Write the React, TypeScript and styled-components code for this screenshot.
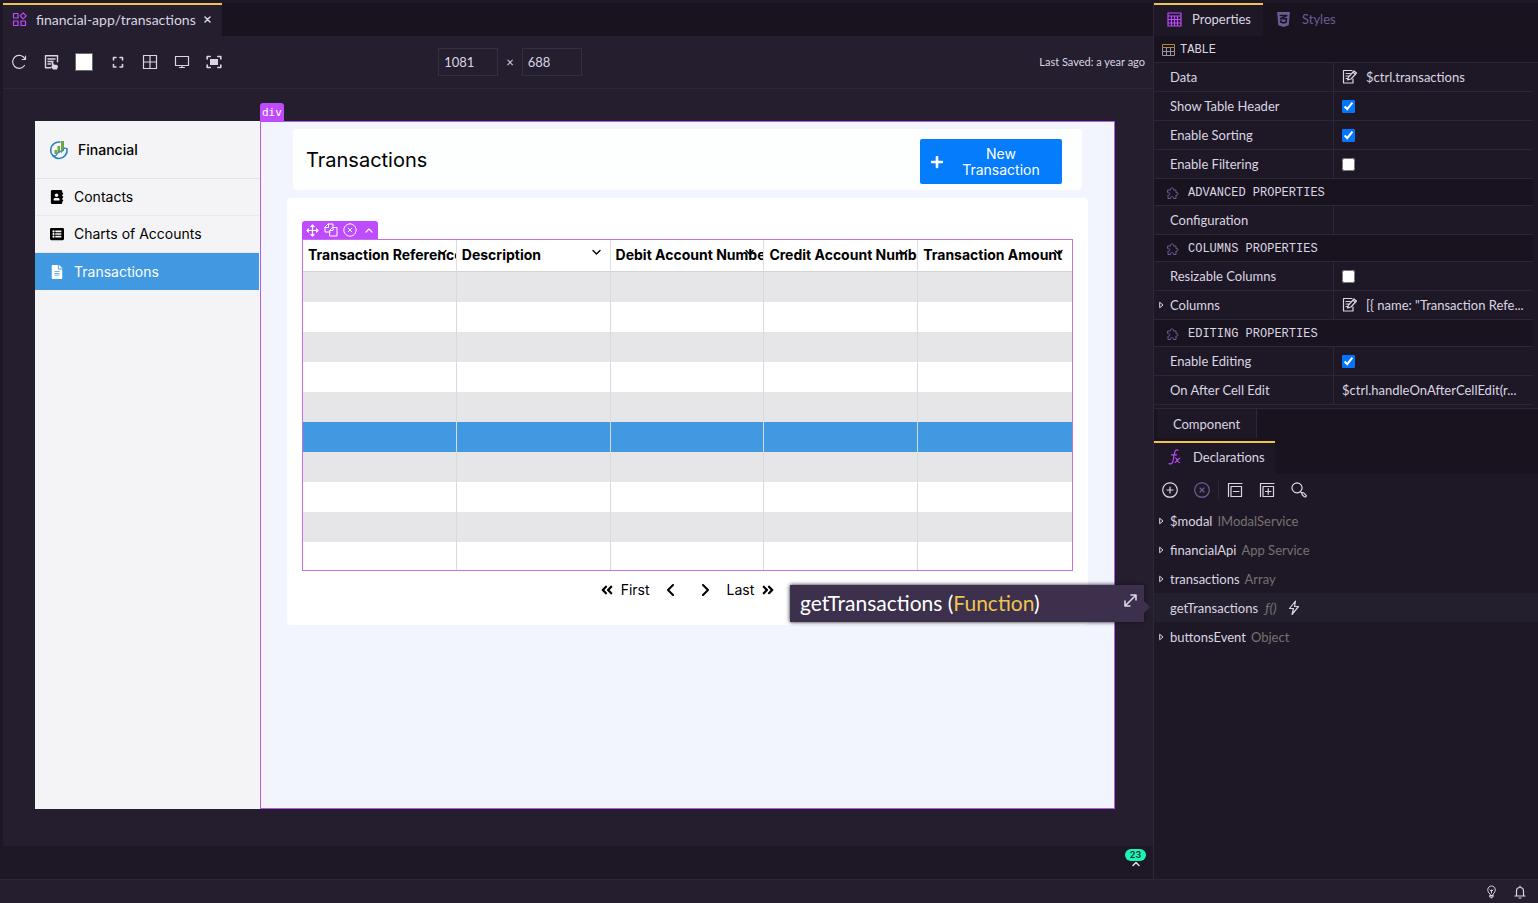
import React from 'react';
import styled, { createGlobalStyle } from 'styled-components';
import { FaAddressBook, FaListAlt, FaFileAlt, FaPlus, FaAngleDoubleLeft, FaAngleDoubleRight, FaCss3Alt } from 'react-icons/fa';

const ui = 'Lato, "Open Sans", sans-serif';
const app = 'Inter, "Liberation Sans", sans-serif';
const mono = '"Liberation Mono", "DejaVu Sans Mono", monospace';

const c = {
  base: '#1e1826',
  dark: '#191320',
  canvas: '#241e2f',
  line: '#2c2637',
  text: '#dad5e2',
  muted: '#77726f',
  violet: '#6a5d93',
  purple: '#be4bfd',
  yellow: '#eec44e',
};

const GlobalStyle = createGlobalStyle`
  * { box-sizing: border-box; }
  body { margin: 0; background: ${c.base}; color: ${c.text}; font: 13px/16px ${ui}; }
  button { font: inherit; color: inherit; background: none; border: 0; padding: 0; margin: 0; }
  svg { display: block; flex: none; }
`;

const Shell = styled.div`
  min-height: 100vh;
  display: flex;
  flex-direction: column;
  padding-top: 3px;
`;
const Workspace = styled.div`
  flex: 1;
  display: grid;
  grid-template-columns: minmax(0, 1fr) 385px;
`;
const Editor = styled.main`
  display: flex;
  flex-direction: column;
  min-width: 0;
  padding-left: 3px;
  background: ${c.base};
`;
const TabBar = styled.div`
  display: flex;
  height: 33px;
  flex: none;
  background: ${c.dark};
`;
const FileTab = styled.div`
  display: flex;
  align-items: center;
  width: 219px;
  padding: 0 9px 2px;
  background: ${c.canvas};
  border-top: 2px solid ${c.yellow};
  font-size: 14px;
  & > span { margin: 0 8px 0 9px; }
`;
const Toolbar = styled.div`
  display: grid;
  grid-template-columns: 1fr auto 1fr;
  align-items: center;
  height: 53px;
  flex: none;
  padding: 0 8px;
  background: ${c.canvas};
  border-bottom: 1px solid ${c.line};
`;
const ToolGroup = styled.div`
  display: flex;
  align-items: center;
  gap: 16px;
`;
const ToolButton = styled.button`
  display: grid;
  place-items: center;
  width: 16px;
  height: 16px;
`;
const Swatch = styled.button`
  width: 18px;
  height: 18px;
  && { margin-right: 1px; }
  background: #fff;
  border: 1px solid #6b6676;
`;
const SizeFields = styled.div`
  display: flex;
  align-items: center;
  gap: 8px;
  margin-right: 136px;
`;
const SizeInput = styled.input`
  width: 60px;
  height: 28px;
  padding: 0 5px;
  font: 13px ${ui};
  color: ${c.text};
  background: ${c.canvas};
  border: 1px solid #352f40;
`;
const Saved = styled.div`
  text-align: right;
  font-size: 11px;
`;
const Canvas = styled.div`
  flex: 1;
  display: flex;
  padding: 32px 38px 37px 32px;
  background: ${c.canvas};
`;
const Frame = styled.div`
  flex: 1;
  min-width: 0;
  display: grid;
  grid-template-columns: 225px minmax(0, 1fr);
  color: #000;
  font-family: ${app};
  font-size: 14px;
`;
const Side = styled.nav`
  background: #f4f4f6;
`;
const Brand = styled.div`
  display: flex;
  align-items: center;
  gap: 9px;
  height: 58px;
  padding-left: 14px;
  font-weight: 500;
  border-bottom: 1px solid #e4e4e8;
`;
const SideLink = styled.a<{ $active?: boolean }>`
  display: flex;
  align-items: center;
  gap: 10px;
  height: 37px;
  margin-right: 1px;
  padding-left: 15px;
  text-decoration: none;
  color: ${p => (p.$active ? '#fff' : '#000')};
  background: ${p => (p.$active ? '#4199e2' : 'none')};
  border-bottom: ${p => (p.$active ? 0 : 1)}px solid #e9e9ec;
`;
const IconSlot = styled.span`
  display: grid;
  place-items: center;
  width: 14px;
`;
const Page = styled.div`
  position: relative;
  padding: 7px 26px 0;
  background: #f2f4fe;
  border: 1px solid #b45be2;
`;
const DivTag = styled.div`
  position: absolute;
  left: -1px;
  top: -19px;
  height: 19px;
  padding: 0 2px;
  border-radius: 3px 3px 0 0;
  background: ${c.purple};
  color: #fff;
  font: 11px/19px "DejaVu Sans Mono", monospace;
`;
const TitleCard = styled.div`
  display: flex;
  align-items: center;
  justify-content: space-between;
  height: 61px;
  margin: 0 6px 8px;
  padding: 0 20px 0 13px;
  background: #fdfefe;
  border-radius: 4px;
`;
const Title = styled.h1`
  margin: 0;
  font-size: 20px;
  font-weight: 400;
`;
const NewButton = styled.button`
  display: flex;
  align-items: center;
  width: 142px;
  height: 45px;
  padding: 0 10px;
  && { margin-top: 4px; }
  border-radius: 2px;
  background: #047cfb;
  color: #fff;
  & > span { flex: 1; padding-left: 6px; line-height: 16px; text-align: center; }
`;
const TableCard = styled.section`
  height: 427px;
  padding: 41px 15px 0;
  background: #fff;
  border-radius: 4px;
`;
const Selection = styled.div`
  position: relative;
  height: 332px;
  border: 1px solid #c56fe6;
`;
const SelectionTag = styled.div`
  position: absolute;
  left: -1px;
  top: -19px;
  display: flex;
  align-items: center;
  gap: 5px;
  width: 76px;
  height: 18px;
  padding: 0 4px;
  color: #fff;
  background: ${c.purple};
  border-radius: 3px 3px 0 0;
`;
const Clip = styled.div`
  height: 330px;
  overflow: hidden;
`;
const Grid = styled.table`
  width: 100%;
  table-layout: fixed;
  border-collapse: separate;
  border-spacing: 0;
`;
const Th = styled.th`
  position: relative;
  height: 32px;
  padding: 0 0 2px 5px;
  overflow: hidden;
  white-space: nowrap;
  text-align: left;
  font-weight: 700;
  border-bottom: 1px solid #d3d3d6;
  border-right: 1px solid #dedee2;
  &:last-child { border-right: 0; }
  & > button { position: absolute; right: 9px; top: 8px; }
`;
const Row = styled.tr<{ $tone: string }>`
  background: ${p => p.$tone};
`;
const Td = styled.td`
  height: 30px;
  padding: 0;
  border-right: 1px solid #d9dade;
  &:last-child { border-right: 0; }
`;
const Pager = styled.div`
  display: flex;
  justify-content: center;
  align-items: center;
  height: 38px;
  gap: 9px;
`;
const PageButton = styled.button`
  display: flex;
  align-items: center;
  justify-content: center;
  gap: 7px;
  min-width: 25px;
  height: 20px;
`;
const Drawer = styled.div`
  display: flex;
  justify-content: flex-end;
  align-items: flex-start;
  height: 33px;
  padding: 3px 7px 0 0;
`;
const Count = styled.button`
  display: flex;
  flex-direction: column;
  align-items: center;
  & > span {
    width: 21px;
    height: 12px;
    border-radius: 6px;
    background: #1cf3b5;
    color: #16352f;
    font: 600 9px/12px ${app};
  }
`;
const Panel = styled.aside`
  min-width: 0;
  border-left: 1px solid ${c.line};
  background: ${c.base};
`;
const PanelTab = styled.button<{ $active?: boolean; $width: number }>`
  display: flex;
  align-items: center;
  gap: 10px;
  width: ${p => p.$width}px;
  && { padding: 0 0 3px ${p => (p.$active ? 13 : 12)}px; }
  border-top: 2px solid ${p => (p.$active ? c.yellow : 'transparent')};
  background: ${p => (p.$active ? c.base : 'none')};
  color: ${p => (p.$active ? c.text : c.violet)};
`;
const Section = styled.h2<{ $main?: boolean }>`
  display: flex;
  align-items: center;
  gap: ${p => (p.$main ? 5 : 9)}px;
  height: 27px;
  margin: 0 ${p => (p.$main ? 0 : 5)}px 0 0;
  padding: 2px 0 0 ${p => (p.$main ? 8 : 12)}px;
  font: 400 12px/16px ${mono};
  background: ${c.dark};
  border-bottom: 1px solid ${c.line};
`;
const Property = styled.div`
  display: grid;
  grid-template-columns: 180px minmax(0, 1fr);
  height: 29px;
  margin-right: 5px;
  border-bottom: 1px solid ${c.line};
`;
const Name = styled.label`
  display: flex;
  align-items: center;
  padding-left: 5px;
  border-right: 1px solid ${c.line};
`;
const Arrow = styled.span`
  display: grid;
  place-items: center;
  width: 5px;
  height: 16px;
  margin-right: 6px;
`;
const Value = styled.div`
  display: flex;
  align-items: center;
  gap: 8px;
  min-width: 0;
  padding: 0 2px 0 8px;
  & > span { overflow: hidden; text-overflow: ellipsis; white-space: nowrap; }
`;
const Check = styled.input`
  width: 13px;
  height: 13px;
  margin: 0;
  accent-color: #0075ff;
`;
const ComponentBar = styled.div`
  height: 33px;
  margin-top: 3px;
  padding-left: 3px;
  background: ${c.dark};
  border-top: 1px solid ${c.line};
`;
const ComponentTab = styled.button`
  width: 100px;
  height: 29px;
  background: ${c.base};
  border-right: 1px solid ${c.line};
`;
const DeclTools = styled.div`
  display: flex;
  align-items: center;
  gap: 16px;
  height: 32px;
  padding-left: 8px;
`;
const ToolDivider = styled.span`
  width: 1px;
  height: 18px;
  margin: 0 -8px;
  background: ${c.line};
`;
const Declaration = styled.div<{ $selected?: boolean }>`
  position: relative;
  display: flex;
  align-items: center;
  height: 29px;
  padding-left: 5px;
  background: ${p => (p.$selected ? '#241f2d' : 'none')};
  & > i { margin-left: 5px; font-style: normal; color: ${c.muted}; }
  & > em { margin: 0 11px 0 7px; font-size: 14px; color: ${c.muted}; }
`;
const Tooltip = styled.div`
  position: absolute;
  right: calc(100% + 10px);
  top: -8px;
  width: 354px;
  height: 37px;
  padding: 6px 10px;
  color: #fff;
  background: #3c304d;
  box-shadow: 0 0 4px #14101c;
  font-size: 21px;
  line-height: 24px;
  & > b { font-weight: 400; color: ${c.yellow}; }
  & > button { position: absolute; right: 6px; top: 8px; color: ${c.text}; }
  &::after {
    content: '';
    position: absolute;
    left: 100%;
    top: 16px;
    border: 6px solid transparent;
    border-left-color: #3c304d;
    border-right-width: 0;
  }
`;
const Status = styled.footer`
  display: flex;
  justify-content: flex-end;
  align-items: center;
  gap: 17px;
  height: 24px;
  padding-right: 12px;
  background: ${c.canvas};
  border-top: 1px solid ${c.line};
`;

type SvgProps = { d: string; w?: number; h?: number; sw?: number; color?: string; fd?: string };
const Icon = ({ d, w = 16, h = w, sw = 1.2, color = 'currentColor', fd }: SvgProps) => (
  <svg width={w} height={h} viewBox={`0 0 ${w} ${h}`} fill="none" stroke={color} strokeWidth={sw} strokeLinecap="round" strokeLinejoin="round" aria-hidden="true">
    <path d={d} />
    {fd && <path d={fd} fill={color} stroke="none" />}
  </svg>
);

const icons = {
  blocks: 'M1.5 1.5h4.500v4.500h-4.500zM1.5 9h4.500v4.500h-4.500zM9 9h4.500v4.500H9zM11.2 .8l3 3-3 3-3-3z',
  close: 'M1 1l5 5M6 1L1 6',
  refresh: 'M14 5A6.500 6.500 0 1 0 13.500 11.500M14.500 2.200v3.300h-3.300',
  inspect: 'M7.5 13.8h-5v-12h12v6M5 5h7M5 7.500h5M5 10h2.500',
  expand: 'M3.500 6V3.500H6M10 3.500h2.500V6M12.500 10.500V13H10M6 13H3.500v-2.500',
  panes: 'M1.5 1.5h13v13h-13zM8 1.5v13M1.5 8h13',
  monitor: 'M1.5 2.5h13v9h-13zM8 11.5v2M5.5 13.5h5',
  fit: 'M1.200 5V2.5h3M11.800 2.5h3V5M14.800 11v2.5h-3M4.200 13.5h-3V11',
  table: 'M1 1h13v13H1zM1 4h13M1 7.5h13M1 11h13M4.5 4v10M7.5 4v10M10.5 4v10',
  puzzle: 'M2 3h2.500C3.500 .3 8.500 .3 7.500 3H10v2.500C12.700 4.500 12.700 9 10 8v3.500H7.500C8.500 9 3.500 9 4.500 11.500H2V8C4.500 9 4.500 4.500 2 5.500z',
  edit: 'M11 10v4H1.500V1.500H10M4 4.500h4M4 7h2.500M4 9.500h1.500M5.500 11l1-3L12 2l2.500 2L9 10zM11 3.200l2.500 2.200',
  plusCircle: 'M8 .8a7.200 7.200 0 1 0 .01 0M8 5v6M5 8h6',
  xCircle: 'M8 .8a7.200 7.200 0 1 0 .01 0M6 6l4 4M10 6l-4 4',
  collapse: 'M1.500 14.500V1.500H15M4 4.500h10.500v10H4zM6.500 9.500h5.500',
  expandAll: 'M1.500 14.500V1.500H15M4 4.500h10.500v10H4zM6.500 9.500h5.500M9.250 6.700v5.600',
  search: 'M6 .8a5 5 0 1 0 .01 0M9.500 9.800l1.700 1.500M11 11.200c1-1.200 2 0 3 1s1.800 1.700 1 2.400-1.800.2-2.700-.8-2-1.600-1.300-2.600',
  bolt: 'M7.500 1L1.500 8.500h4L4 14.500l6.500-8h-4z',
  fx: 'M11 1.200c-2-.8-2.900.4-3.300 2.300L6 12c-.4 2.300-1.900 3.300-4 2.600M4.500 5.800h5M8.500 9c1.500 0 1.800 4.500 4 4.500M13 9c-1 0-4 4.500-5 4.500',
  move: 'M6.500 1v11M1 6.500h11M5 2.500L6.500 1 8 2.500M5 10.500L6.500 12 8 10.500M2.500 5L1 6.500 2.500 8M10.500 5L12 6.500 10.500 8',
  copy: 'M6 9H1V4l3-3h5v3M1 4.500h3.500V1M6 7l2.500-2.500h4.500V13H6zM6 7.500h3V4.500',
  tagClose: 'M7 .8a6.200 6.200 0 1 0 .01 0M5.200 5.200l3.600 3.600M8.800 5.200L5.200 8.800',
  up: 'M4 8l3-3 3 3',
  down: 'M1 2.500l3.500 3.500L8 2.500',
  diag: 'M2 13L13 2M8 2h5v5M2 8v5h5',
  bulb: 'M4 9C.2 6.500 1.500 1 5.500 1S10.800 6.500 7 9v3H4zM4 10.500h3M5.500 8V5M4 5l1.500 1.500L7 5M5 12.800h1',
  bell: 'M1 11h10M2.500 11V6a3.500 3.500 0 0 1 7 0v5M6 1v1.500M5 13h2',
};

const Logo = () => (
  <svg width="20" height="20" viewBox="0 0 20 20" fill="none" aria-hidden="true">
    <path d="M11.500 2.200A8.200 8.200 0 1 0 18 9" stroke="#2880bd" strokeWidth="1.600" />
    <path d="M5.500 14v-4h2.500v4M8.500 13V6h2.500v7M12 11V1h3v10z" fill="#6fa642" />
    <path d="M3 15l3.500 1 4-5 2 1 3-4 3.500 1" stroke="#3289c5" strokeWidth="1.200" />
  </svg>
);

const Expander = () => <Icon w={5} h={8} sw={1} d="M1 1.500L4 4 1 6.500z" />;

type Prop = { name: string; checked?: boolean; value?: string; edit?: boolean; open?: boolean };
const PropertyRow = ({ name, checked, value, edit, open }: Prop) => {
  const id = name.toLowerCase().replace(/ /g, '-');
  return (
    <Property>
      <Name htmlFor={checked === undefined ? undefined : id}><Arrow>{open && <Expander />}</Arrow>{name}</Name>
      <Value>
        {edit && <Icon d={icons.edit} />}
        {checked !== undefined && <Check id={id} type="checkbox" defaultChecked={checked} />}
        {value && <span>{value}</span>}
      </Value>
    </Property>
  );
};

const SectionTitle = ({ children }: { children: React.ReactNode }) => (
  <Section><Icon w={13} sw={1} d={icons.puzzle} color={c.violet} />{children}</Section>
);

const columns = ['Transaction Reference', 'Description', 'Debit Account Number', 'Credit Account Number', 'Transaction Amount'];
const tones = ['#e6e6e8', '#fff', '#e6e6e8', '#fff', '#e6e6e8', '#4199e2', '#e6e6e8', '#fff', '#e6e6e8', '#fff'];

export default function App() {
  return (
    <Shell>
      <GlobalStyle />
      <Workspace>
        <Editor>
          <TabBar>
            <FileTab>
              <Icon w={15} d={icons.blocks} color={c.purple} />
              <span>financial-app/transactions</span>
              <button aria-label="Close tab"><Icon w={7} d={icons.close} sw={1.5} /></button>
            </FileTab>
          </TabBar>
          <Toolbar>
            <ToolGroup>
              <ToolButton aria-label="Refresh"><Icon d={icons.refresh} /></ToolButton>
              <ToolButton aria-label="Inspect"><Icon d={icons.inspect} sw={1.4} fd="M8.500 8l1.500 0 .8 2.500 3.500.5.7 1.500-1 3h-4l-2.500-3h1.500z" /></ToolButton>
              <Swatch aria-label="Background colour" />
              <ToolButton aria-label="Expand"><Icon d={icons.expand} sw={1.6} /></ToolButton>
              <ToolButton aria-label="Split"><Icon d={icons.panes} /></ToolButton>
              <ToolButton aria-label="Device"><Icon d={icons.monitor} /></ToolButton>
              <ToolButton aria-label="Fit"><Icon d={icons.fit} sw={1.6} fd="M4 5h8v6H4z" /></ToolButton>
            </ToolGroup>
            <SizeFields>
              <SizeInput aria-label="Width" defaultValue="1081" />
              <span>×</span>
              <SizeInput aria-label="Height" defaultValue="688" />
            </SizeFields>
            <Saved>Last Saved: a year ago</Saved>
          </Toolbar>
          <Canvas>
            <Frame>
              <Side>
                <Brand><Logo />Financial</Brand>
                <SideLink href="#contacts"><IconSlot><FaAddressBook size={14} /></IconSlot>Contacts</SideLink>
                <SideLink href="#accounts"><IconSlot><FaListAlt size={14} /></IconSlot>Charts of Accounts</SideLink>
                <SideLink href="#transactions" $active><IconSlot><FaFileAlt size={14} /></IconSlot>Transactions</SideLink>
              </Side>
              <Page>
                <DivTag>div</DivTag>
                <TitleCard>
                  <Title>Transactions</Title>
                  <NewButton><FaPlus size={14} /><span>New Transaction</span></NewButton>
                </TitleCard>
                <TableCard>
                  <Selection>
                    <SelectionTag>
                      <Icon w={13} d={icons.move} />
                      <Icon w={14} sw={1} d={icons.copy} />
                      <Icon w={14} sw={1} d={icons.tagClose} />
                      <Icon w={13} d={icons.up} />
                    </SelectionTag>
                    <Clip>
                      <Grid>
                        <thead>
                          <tr>
                            {columns.map(name => (
                              <Th key={name}>{name}<button aria-label={`${name} menu`}><Icon w={9} d={icons.down} sw={1.4} /></button></Th>
                            ))}
                          </tr>
                        </thead>
                        <tbody>
                          {tones.map((tone, i) => (
                            <Row key={i} $tone={tone}>{columns.map(name => <Td key={name} />)}</Row>
                          ))}
                        </tbody>
                      </Grid>
                    </Clip>
                  </Selection>
                  <Pager>
                    <PageButton><FaAngleDoubleLeft size={14} />First</PageButton>
                    <PageButton aria-label="Previous"><Icon w={12} d="M8 1L3 6l5 5" sw={2} /></PageButton>
                    <PageButton aria-label="Next"><Icon w={12} d="M4 1l5 5-5 5" sw={2} /></PageButton>
                    <PageButton>Last<FaAngleDoubleRight size={14} /></PageButton>
                  </Pager>
                </TableCard>
              </Page>
            </Frame>
          </Canvas>
          <Drawer>
            <Count aria-label="Open console"><span>23</span><Icon w={10} h={6} d="M2 4.500l3-3 3 3" sw={1.6} /></Count>
          </Drawer>
        </Editor>
        <Panel>
          <TabBar>
            <PanelTab $active $width={109}><Icon w={15} d={icons.table} color={c.purple} />Properties</PanelTab>
            <PanelTab $width={83}><FaCss3Alt size={17} />Styles</PanelTab>
          </TabBar>
          <Section $main>
            <svg width="13" height="12" viewBox="0 0 13 12" fill="none" aria-hidden="true">
              <path d="M.5 3.500v8h12v-8M.5 7.500h12M4.500 3.500v8M8.500 3.500v8" stroke="#9a949f" />
              <path d="M.5 3.500v-3h12v3z" stroke="#a78c45" />
            </svg>
            TABLE
          </Section>
          <PropertyRow name="Data" edit value="$ctrl.transactions" />
          <PropertyRow name="Show Table Header" checked />
          <PropertyRow name="Enable Sorting" checked />
          <PropertyRow name="Enable Filtering" checked={false} />
          <SectionTitle>ADVANCED PROPERTIES</SectionTitle>
          <PropertyRow name="Configuration" />
          <SectionTitle>COLUMNS PROPERTIES</SectionTitle>
          <PropertyRow name="Resizable Columns" checked={false} />
          <PropertyRow name="Columns" open edit value={'[{ name: "Transaction Refe...'} />
          <SectionTitle>EDITING PROPERTIES</SectionTitle>
          <PropertyRow name="Enable Editing" checked />
          <PropertyRow name="On After Cell Edit" value="$ctrl.handleOnAfterCellEdit(r..." />
          <ComponentBar><ComponentTab>Component</ComponentTab></ComponentBar>
          <TabBar>
            <PanelTab $active $width={121}><Icon d={icons.fx} color={c.purple} />Declarations</PanelTab>
          </TabBar>
          <DeclTools>
            <ToolButton aria-label="Add"><Icon d={icons.plusCircle} /></ToolButton>
            <ToolButton aria-label="Remove"><Icon d={icons.xCircle} color={c.violet} /></ToolButton>
            <ToolDivider />
            <ToolButton aria-label="Collapse all"><Icon d={icons.collapse} /></ToolButton>
            <ToolButton aria-label="Expand all"><Icon d={icons.expandAll} /></ToolButton>
            <ToolButton aria-label="Search"><Icon d={icons.search} /></ToolButton>
          </DeclTools>
          <Declaration><Arrow><Expander /></Arrow>$modal<i>IModalService</i></Declaration>
          <Declaration><Arrow><Expander /></Arrow>financialApi<i>App Service</i></Declaration>
          <Declaration><Arrow><Expander /></Arrow>transactions<i>Array</i></Declaration>
          <Declaration $selected>
            <Arrow />getTransactions<em>ƒ()</em><Icon w={12} h={16} d={icons.bolt} />
            <Tooltip>getTransactions (<b>Function</b>)<button aria-label="Expand details"><Icon w={15} d={icons.diag} sw={1.6} /></button></Tooltip>
          </Declaration>
          <Declaration><Arrow><Expander /></Arrow>buttonsEvent<i>Object</i></Declaration>
        </Panel>
      </Workspace>
      <Status>
        <button aria-label="Tips"><Icon w={11} h={14} sw={1} d={icons.bulb} /></button>
        <button aria-label="Notifications"><Icon w={12} h={14} d={icons.bell} /></button>
      </Status>
    </Shell>
  );
}
